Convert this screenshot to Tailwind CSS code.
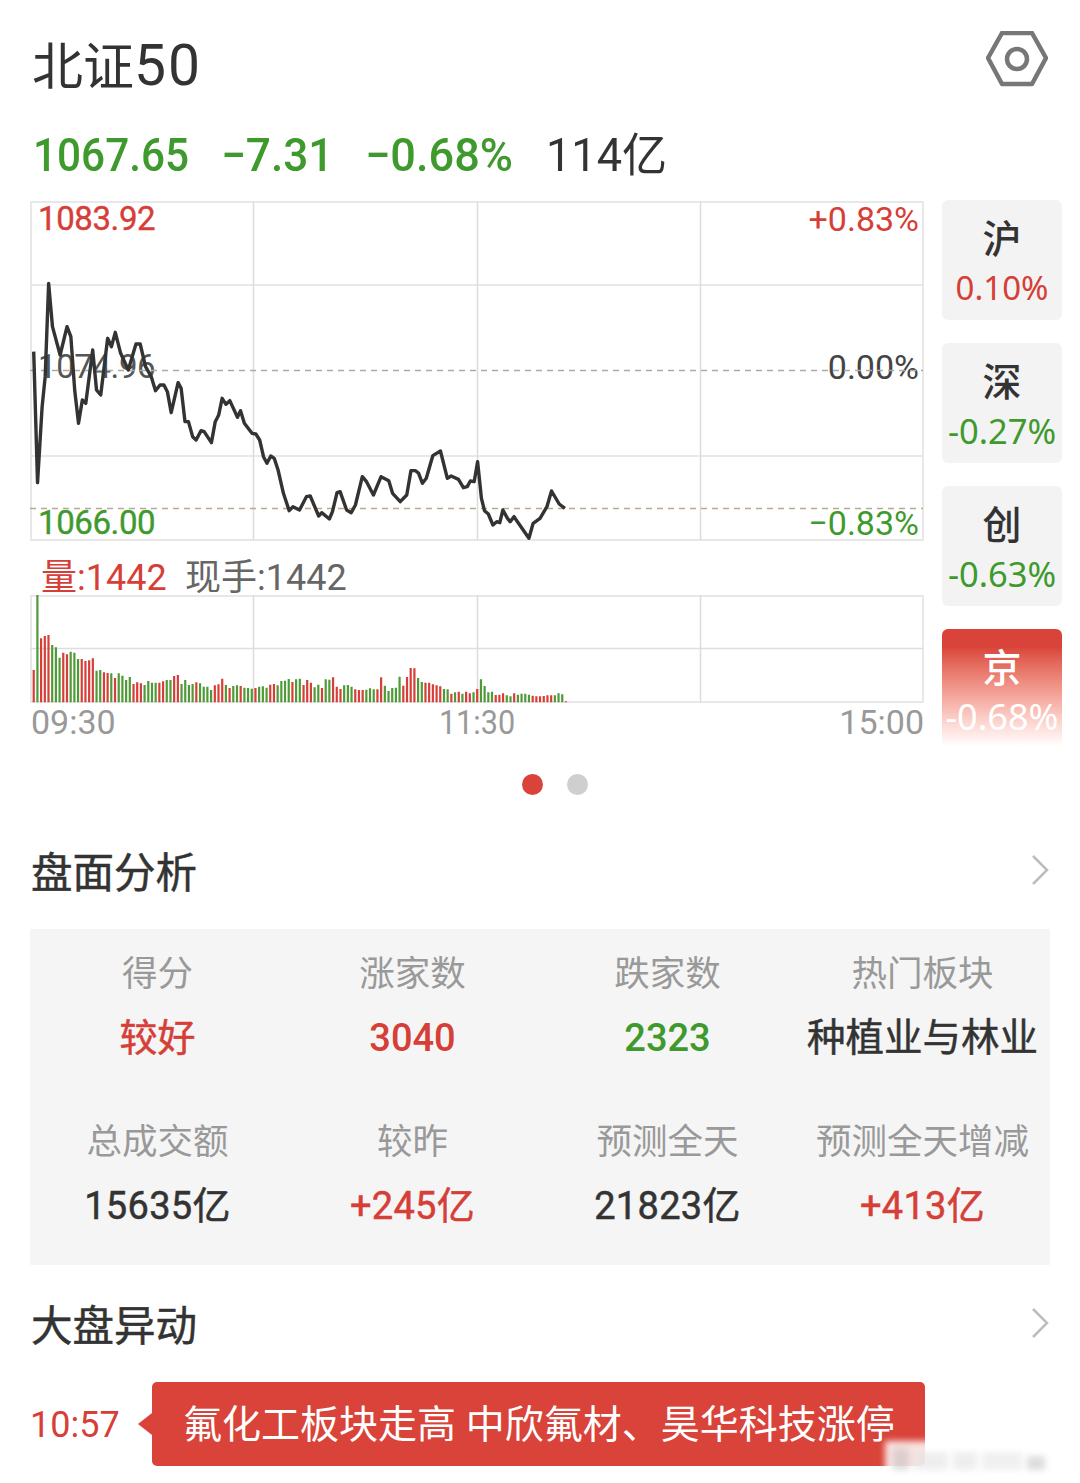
<!DOCTYPE html>
<html lang="zh">
<head>
<meta charset="utf-8">
<script src="https://cdn.jsdelivr.net/npm/@tailwindcss/browser@4"></script>
</head>
<body class="bg-white">
<div class="relative w-[1080px] h-[1483px] overflow-hidden bg-white text-[#333] font-['Roboto','Noto_Sans_CJK_SC',sans-serif]">

  <header class="h-[125px] pt-[33px] pl-[32px] pr-[32px] flex justify-between items-start">
    <h1 class="text-[51px] leading-[66px] font-normal text-[#333]">北证<span class="text-[57px] tracking-[2px]">50</span></h1>
    <svg class="-mt-[2px]" width="62" height="58" viewBox="0 0 62 58" fill="none" stroke="#777" stroke-width="4.5" stroke-linejoin="round"><path d="M16 2H46L60 27L46 53H16L2 27Z"/><circle cx="31" cy="28" r="10"/></svg>
  </header>

  <div class="h-[60px] pl-[33px] flex items-center text-[46px] leading-[60px] font-medium text-[#3f9a2e]">
    <span class="w-[188px] whitespace-nowrap origin-left scale-x-[0.92]">1067.65</span>
    <span class="w-[144px] whitespace-nowrap origin-left scale-x-[0.96]">−7.31</span>
    <span class="w-[181px] whitespace-nowrap origin-left scale-x-[0.98]">−0.68%</span>
    <span class="text-[#333] font-normal whitespace-nowrap origin-left scale-x-[0.98]">114亿</span>
  </div>

  <div class="mt-[15px] pl-[30px] h-[545px] flex items-start">
    <div class="w-[894px]">
      <div class="relative h-[341px]">
        <span class="absolute left-[8px] top-0 text-[33px] leading-[38px] tracking-[-0.4px] [-webkit-text-stroke:0.4px] text-[#d63e38]">1083.92</span>
        <span class="absolute right-[5px] top-0 text-[34px] leading-[38px] text-[#d63e38]">+0.83%</span>
        <span class="absolute left-[8px] top-[148px] text-[33px] leading-[38px] tracking-[-0.4px] text-[#555]">1074.96</span>
        <span class="absolute right-[5px] top-[148px] text-[34px] leading-[38px] text-[#444]">0.00%</span>
        <span class="absolute left-[8px] top-[304px] text-[33px] leading-[38px] tracking-[-0.4px] [-webkit-text-stroke:0.4px] text-[#3f9a2e]">1066.00</span>
        <span class="absolute right-[5px] top-[304px] text-[34px] leading-[38px] text-[#3f9a2e]">−0.83%</span>
        <svg class="absolute left-0 top-0" width="894" height="341" viewBox="0 0 894 341" fill="none">
          <rect x="1" y="2" width="892" height="338" stroke="#e8e8e8" stroke-width="2"/>
          <path d="M0 85H893M0 256H893" stroke="#e8e8e8" stroke-width="2"/>
          <path d="M223.5 2V340M447.5 2V340M670.5 2V340" stroke="#dcdcdc" stroke-width="1.5"/>
          <path d="M0 170.5H893" stroke="#aaa" stroke-width="1.5" stroke-dasharray="6 5"/>
          <path d="M0 308.5H893" stroke="#bba98f" stroke-width="1.5" stroke-dasharray="6 5"/>
          <g transform="translate(-30,-10) scale(0.383,0.33333)">
            <polyline vector-effect="non-scaling-stroke" stroke="#333" stroke-width="3.4" stroke-linejoin="round" points="88,485 98,878 110,650 118,560 127,280 137,410 157,495 175,410 185,440 195,600 205,700 215,630 224,640 242,480 252,600 263,615 281,445 291,470 301,427 315,490 335,540 355,462 366,462 380,530 395,560 406,602 418,585 428,585 437,605 447,668 465,578 473,595 483,695 492,695 503,740 512,750 525,722 533,725 552,758 562,695 571,675 580,625 590,643 600,632 620,682 628,662 638,700 658,730 668,732 678,750 688,800 697,820 707,798 716,805 726,840 740,910 755,962 765,950 782,960 800,920 810,918 832,978 840,968 860,987 868,965 880,908 888,905 905,960 917,968 928,945 946,860 957,875 975,915 995,860 1015,872 1025,910 1045,935 1062,915 1073,842 1085,842 1093,850 1103,880 1113,865 1130,797 1150,783 1168,865 1178,858 1197,868 1210,893 1220,890 1228,873 1238,875 1247,815 1257,925 1265,962 1275,972 1287,1005 1297,995 1305,998 1313,960 1325,985 1332,995 1342,980 1381,1045 1392,1000 1410,985 1428,950 1440,903 1460,942 1475,955"/>
          </g>
        </svg>
      </div>
      <div class="h-[54px] pl-[11px] pt-[16px] flex text-[36px] leading-[42px]">
        <span class="w-[144px] text-[#d63e38]">量:1442</span>
        <span class="text-[#666]">现手:1442</span>
      </div>
      <div class="relative h-[108px]">
        <svg class="absolute left-0 top-0" width="894" height="108" viewBox="0 0 894 108" fill="none">
          <rect x="1" y="1" width="892" height="106" stroke="#e8e8e8" stroke-width="2"/>
          <path d="M0 53.5H893" stroke="#dedede" stroke-width="1.5"/>
          <path d="M223.5 0V107M447.5 0V107M670.5 0V107" stroke="#dcdcdc" stroke-width="1.5"/>
          <g id="bars" transform="translate(-30,-45) scale(0.383,0.33333)"></g>
        </svg>
      </div>
      <div class="relative h-[38px] text-[34px] leading-[38px] text-[#999]">
        <span class="absolute left-[1px] top-0">09:30</span>
        <span class="absolute left-[447px] top-0 -translate-x-1/2 scale-x-[0.9]">11:30</span>
        <span class="absolute right-0 top-0">15:00</span>
      </div>
    </div>

    <div class="ml-[18px] w-[120px] flex flex-col gap-[23px] text-center">
      <div class="h-[120px] rounded-[6px] bg-[#f3f3f3] pt-[15px]">
        <div class="text-[39px] leading-[50px] font-medium text-[#333]">沪</div>
        <div class="mt-[2px] text-[33px] leading-[42px] font-['Noto_Sans',sans-serif] text-[#d63e38]">0.10%</div>
      </div>
      <div class="h-[120px] rounded-[6px] bg-[#f3f3f3] pt-[15px]">
        <div class="text-[39px] leading-[50px] font-medium text-[#333]">深</div>
        <div class="mt-[2px] text-[34.5px] leading-[42px] font-['Noto_Sans',sans-serif] text-[#3f9a2e]">-0.27%</div>
      </div>
      <div class="h-[120px] rounded-[6px] bg-[#f3f3f3] pt-[15px]">
        <div class="text-[39px] leading-[50px] font-medium text-[#333]">创</div>
        <div class="mt-[2px] text-[34.5px] leading-[42px] font-['Noto_Sans',sans-serif] text-[#3f9a2e]">-0.63%</div>
      </div>
      <div class="h-[117px] rounded-t-[6px] pt-[15px] bg-gradient-to-b from-[#d9433a] from-15% to-white text-white">
        <div class="text-[39px] leading-[50px] font-medium">京</div>
        <div class="mt-[2px] text-[36px] leading-[42px] font-['Noto_Sans',sans-serif] -mx-[4px] whitespace-nowrap">-0.68%</div>
      </div>
    </div>
  </div>

  <div class="mt-[29px] pl-[522px] flex gap-[24px]">
    <span class="w-[21px] h-[21px] rounded-full bg-[#d9433a]"></span>
    <span class="w-[21px] h-[21px] rounded-full bg-[#cfcfcf]"></span>
  </div>

  <div class="mt-[50px] h-[56px] pl-[31px] pr-[30px] flex items-center justify-between">
    <h2 class="pt-[2px] text-[41.5px] leading-[54px] font-normal [-webkit-text-stroke:0.5px] text-[#333]">盘面分析</h2>
    <svg class="-mt-[6px]" width="20" height="32" viewBox="0 0 20 32" fill="none" stroke="#bdbdbd" stroke-width="2.5"><path d="M3 2L17 16L3 30"/></svg>
  </div>

  <div class="mt-[28px] mx-[30px] w-[1020px] h-[336px] bg-[#f5f5f5] pt-[23px] grid grid-cols-4 gap-y-[59px] auto-rows-[109px] text-center">
    <div><div class="h-[44px] text-[35.5px] leading-[44px] text-[#999]">得分</div><div class="mt-[20px] h-[44px] text-[38px] leading-[44px] [-webkit-text-stroke:0.5px] text-[#d63e38]">较好</div></div>
    <div><div class="h-[44px] text-[35.5px] leading-[44px] text-[#999]">涨家数</div><div class="mt-[20px] h-[44px] text-[38px] leading-[44px] font-medium text-[#d63e38]">3040</div></div>
    <div><div class="h-[44px] text-[35.5px] leading-[44px] text-[#999]">跌家数</div><div class="mt-[20px] h-[44px] text-[38px] leading-[44px] font-medium text-[#3f9a2e]">2323</div></div>
    <div><div class="h-[44px] text-[35.5px] leading-[44px] text-[#999]">热门板块</div><div class="mt-[20px] h-[44px] text-[38.5px] leading-[44px] [-webkit-text-stroke:0.5px] text-[#333] whitespace-nowrap">种植业与林业</div></div>
    <div><div class="h-[44px] text-[35.5px] leading-[44px] text-[#999]">总成交额</div><div class="mt-[20px] h-[44px] text-[38px] leading-[44px] tracking-[0.3px] [-webkit-text-stroke:0.5px] text-[#333]">15635亿</div></div>
    <div><div class="h-[44px] text-[35.5px] leading-[44px] text-[#999]">较昨</div><div class="mt-[20px] h-[44px] text-[38px] leading-[44px] tracking-[0.3px] [-webkit-text-stroke:0.5px] text-[#d63e38]">+245亿</div></div>
    <div><div class="h-[44px] text-[35.5px] leading-[44px] text-[#999]">预测全天</div><div class="mt-[20px] h-[44px] text-[38px] leading-[44px] tracking-[0.3px] [-webkit-text-stroke:0.5px] text-[#333]">21823亿</div></div>
    <div><div class="h-[44px] text-[35.5px] leading-[44px] text-[#999]">预测全天增减</div><div class="mt-[20px] h-[44px] text-[38px] leading-[44px] tracking-[0.3px] [-webkit-text-stroke:0.5px] text-[#d63e38]">+413亿</div></div>
  </div>

  <div class="mt-[33px] h-[56px] pl-[31px] pr-[30px] flex items-center justify-between">
    <h2 class="pt-[2px] text-[41.5px] leading-[54px] font-normal [-webkit-text-stroke:0.5px] text-[#333]">大盘异动</h2>
    <svg class="-mt-[6px]" width="20" height="32" viewBox="0 0 20 32" fill="none" stroke="#bdbdbd" stroke-width="2.5"><path d="M3 2L17 16L3 30"/></svg>
  </div>

  <div class="mt-[28px] pl-[30px] h-[84px] flex items-center">
    <span class="w-[108px] pt-[3px] text-[36px] leading-[81px] text-[#d63e38]">10:57</span>
    <span class="w-0 h-0 border-y-[11px] border-y-transparent border-r-[14px] border-r-[#d9433a]"></span>
    <div class="w-[773px] h-[84px] rounded-[5px] bg-[#d9433a] pl-[31px] pt-[3px] text-[39px] leading-[81px] text-white whitespace-nowrap">氟化工板块走高 中欣氟材、昊华科技涨停</div>
  </div>

  <div class="absolute left-[885px] top-[1441px] w-[185px] h-[32px] bg-white/85 blur-[3px] flex items-end gap-[5px] pl-[8px] pb-[3px]">
    <span class="w-[16px] h-[22px] bg-[#bbb]/50"></span>
    <span class="w-[34px] h-[18px] bg-[#e2e2e2]/60"></span>
    <span class="w-[24px] h-[18px] bg-[#e2e2e2]/60"></span>
    <span class="w-[40px] h-[18px] bg-[#e6e6e6]/60"></span>
    <span class="w-[18px] h-[14px] bg-[#bbb]/50"></span>
  </div>
</div>
<script>
var tops="360r 132g 265r 258r 255r 285g 292g 323g 308r 313r 305g 308g 327g 327r 333r 331r 325r 362g 360g 367r 369r 370g 384r 370g 377g 390g 381g 402r 397r 400r 405g 393g 398g 398g 398r 394r 390g 390g 378r 375r 402g 390g 405g 402g 397r 400g 410g 410g 420g 406r 403r 386r 405g 414r 408g 406g 408r 413g 414g 416g 414r 410g 409g 413g 404r 402r 406g 393g 392g 387g 396r 388g 386g 405r 390r 398r 412g 404g 414r 388g 389g 382r 410r 417r 406g 405g 410g 418r 420r 420r 419g 415g 418g 418r 382r 407g 423g 414g 413g 380g 407r 381r 354r 355r 384g 396g 398r 398r 403r 406r 409r 417g 418g 431r 427g 425r 431g 425r 430r 427g 417r 388g 408g 427g 425g 435r 434r 430r 436g 439g 430r 434g 431g 431g 434g 437r 439r 439r 438r 436r 436r 436g 430g 433g 454r".split(" ");
var g=document.getElementById("bars"),d={r:"",g:""};
tops.forEach(function(t,i){var c=t.slice(-1),y=parseInt(t,10),x=(88+9.65*i).toFixed(1);d[c]+="M"+x+" "+y+"V457";});
g.innerHTML='<path vector-effect="non-scaling-stroke" stroke-width="2.2" d="'+d.r+'" stroke="#d63e38"/><path vector-effect="non-scaling-stroke" stroke-width="2.2" d="'+d.g+'" stroke="#4f9a36"/>';
</script>
</body>
</html>
